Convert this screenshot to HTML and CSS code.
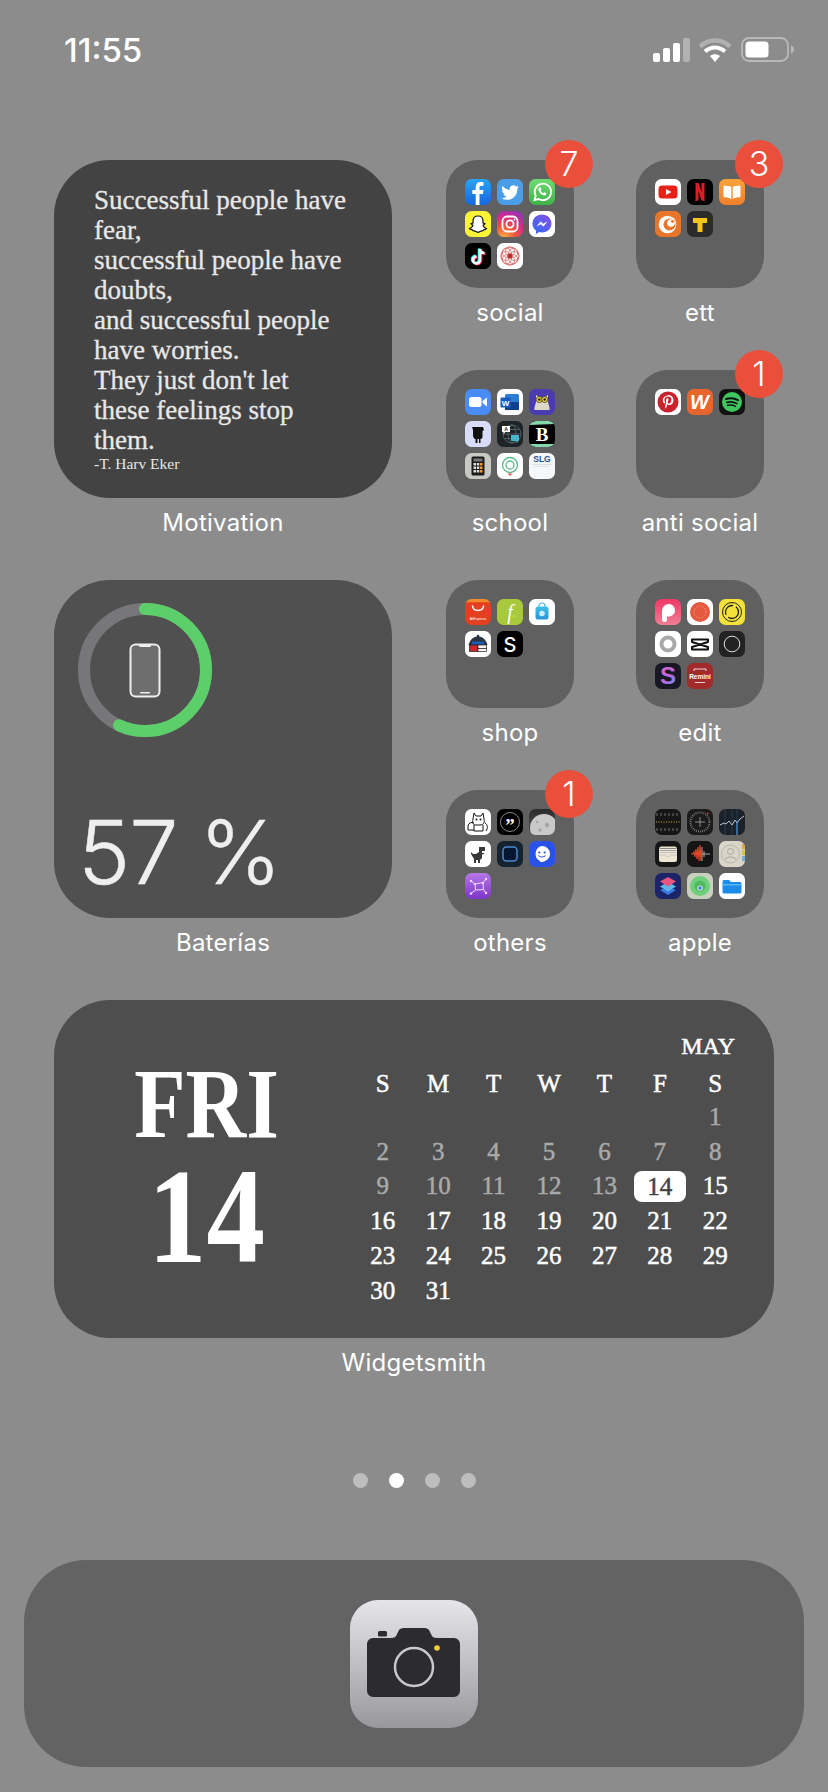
FILE: index.html
```html
<!DOCTYPE html>
<html lang="en">
<head>
<meta charset="utf-8">
<title>Home screen</title>
<link rel="stylesheet" href="styles.css">
</head>
<body>
<div class="screen">
  <header class="status">
    <div class="time">11:55</div>
    <div class="status-icons">
      <svg class="sig" viewBox="0 0 37 24"><rect x="0" y="15" width="7" height="9" rx="2" fill="#fff"/><rect x="10" y="10" width="7" height="14" rx="2" fill="#fff"/><rect x="20" y="5" width="7" height="19" rx="2" fill="#fff"/><rect x="30" y="0" width="7" height="24" rx="2" fill="#b2b2b2"/></svg>
      <svg class="wifi" viewBox="0 0 32 24"><path d="M1 8.500C9.500.500 22.500.500 31 8.500" fill="none" stroke="#b0b0b0" stroke-width="4.500"/><path d="M6 13.500c6-5.500 14-5.500 20 0" fill="none" stroke="#fff" stroke-width="4"/><path d="M11 18c3-2.500 7-2.500 10 0l-5 6z" fill="#fff"/></svg>
      <svg class="batt" viewBox="0 0 53 25"><rect x="1" y="1" width="46" height="23" rx="7" fill="none" stroke="#b9b9b9" stroke-width="1.800"/><rect x="4.500" y="4.500" width="23" height="16" rx="3.500" fill="#fff"/><path d="M50 8.500c2 .5 3 2.200 3 4s-1 3.500-3 4z" fill="#b9b9b9"/></svg>
    </div>
  </header>

  <section class="top-grid">
    <div class="cell">
      <div class="widget quote">
        <p class="quote-text">Successful people have<br>fear,<br>successful people have<br>doubts,<br>and successful people<br>have worries.<br>They just don't let<br>these feelings stop<br>them.</p>
        <p class="quote-author">-T. Harv Eker</p>
      </div>
      <div class="label">Motivation</div>
    </div>
    <div class="apps">
      <div class="cell folder-cell">
        <div class="folder">
          <span class="badge">7</span>
          <svg class="ico fb" viewBox="0 0 26 26"><path fill="#fff" d="M14.500 26V15h3.400l.5-4h-3.900V8.600c0-1.100.4-1.900 2-1.900h2V3.200C18 3.100 16.900 3 15.700 3c-3 0-5 1.800-5 5.200V11H7.300v4h3.400v11z"/></svg>
          <svg class="ico tw" viewBox="0 0 26 26"><path fill="#fff" transform="translate(3 3) scale(.83)" d="M22.460 6c-.77.35-1.600.58-2.460.69a4.300 4.300 0 0 0 1.880-2.380 8.600 8.600 0 0 1-2.720 1.040 4.280 4.280 0 0 0-7.320 3.910A12.160 12.160 0 0 1 3 4.790a4.280 4.280 0 0 0 1.330 5.720 4.240 4.240 0 0 1-1.940-.54v.05a4.280 4.280 0 0 0 3.440 4.200 4.300 4.300 0 0 1-1.930.07 4.280 4.280 0 0 0 4 2.980A8.600 8.600 0 0 1 2 19.540a12.130 12.130 0 0 0 6.560 1.920c7.880 0 12.200-6.530 12.200-12.200l-.01-.55A8.700 8.700 0 0 0 22.460 6z"/></svg>
          <svg class="ico wa" viewBox="0 0 26 26"><path fill="none" stroke="#fff" stroke-width="1.800" d="M5.500 21l1.200-4.200A8.200 8.200 0 1 1 9.800 20z"/><path fill="#fff" d="M10.300 8.500c-1.300 1-1.200 2.600-.2 4.300 1.200 2 3 3.300 4.900 3.600 1.300.2 2.500-.7 2.600-1.800l-2.200-1.300-1 1c-1.300-.5-2.200-1.400-2.800-2.700l.9-1-1-2.300c-.2-.2-.8-.2-1.200.2z"/></svg>
          <svg class="ico sc" viewBox="0 0 26 26"><path fill="#fff" stroke="#111" stroke-width="1.200" d="M13 5c3 0 5 2 5 5v2l2 .7c-.2 1-1.700 1.200-2 1.700.6 1.600 2 2.800 3.500 3.200-.3.9-1.800 1-2.700 1.200-.4 1-.6 1.100-1.700 1-1.600-.2-2.500 1.600-4.100 1.600s-2.500-1.800-4.100-1.600c-1.100.1-1.300 0-1.700-1-.9-.2-2.400-.3-2.700-1.200 1.500-.4 2.900-1.600 3.500-3.200-.3-.5-1.800-.7-2-1.700L8 12v-2c0-3 2-5 5-5z"/></svg>
          <svg class="ico ig" viewBox="0 0 26 26"><rect x="5.500" y="5.500" width="15" height="15" rx="4.500" fill="none" stroke="#fff" stroke-width="1.800"/><circle cx="13" cy="13" r="3.600" fill="none" stroke="#fff" stroke-width="1.800"/><circle cx="17.500" cy="8.500" r="1" fill="#fff"/></svg>
          <svg class="ico white" viewBox="0 0 26 26"><defs><linearGradient id="ms" x1="0" y1="1" x2="1" y2="0"><stop offset="0" stop-color="#2f6cf0"/><stop offset="1" stop-color="#8a4fe8"/></linearGradient></defs><path fill="url(#ms)" d="M13 3.500c5.500 0 9.500 3.900 9.500 9S18.500 21.500 13 21.500c-1 0-1.900-.1-2.700-.4L7 23v-3.400c-2.200-1.700-3.500-4.300-3.500-7.100 0-5.100 4-9 9.500-9z"/><path fill="#fff" d="M7.500 15.500l4-5 2.700 2.200 4.300-2.200-4 5-2.700-2.200z"/></svg>
          <svg class="ico black" viewBox="0 0 26 26"><g fill="none" stroke-width="2.600"><path stroke="#25f4ee" transform="translate(-1 -.6)" d="M15 6v11a3.500 3.500 0 1 1-3.500-3.500M15 6c.3 2.500 2 4 4.500 4.200"/><path stroke="#fe2c55" transform="translate(1 .6)" d="M15 6v11a3.500 3.500 0 1 1-3.500-3.500M15 6c.3 2.500 2 4 4.500 4.200"/><path stroke="#fff" d="M15 6v11a3.500 3.500 0 1 1-3.500-3.500M15 6c.3 2.500 2 4 4.500 4.200"/></g></svg>
          <svg class="ico white" viewBox="0 0 26 26"><g fill="none" stroke="#d9534f" stroke-width=".7"><circle cx="13" cy="13" r="9"/><circle cx="13" cy="8.500" r="4.500"/><circle cx="13" cy="17.500" r="4.500"/><circle cx="8.500" cy="13" r="4.500"/><circle cx="17.500" cy="13" r="4.500"/><circle cx="9.800" cy="9.800" r="4.500"/><circle cx="16.200" cy="9.800" r="4.500"/><circle cx="9.800" cy="16.200" r="4.500"/><circle cx="16.200" cy="16.200" r="4.500"/></g><circle cx="13" cy="13" r="2.500" fill="#b5302c"/></svg>
        </div>
        <div class="label">social</div>
      </div>
      <div class="cell folder-cell">
        <div class="folder">
          <span class="badge">3</span>
          <svg class="ico white" viewBox="0 0 26 26"><rect x="3.500" y="6.500" width="19" height="13" rx="3.500" fill="#e62117"/><path d="M11 10l5.500 3-5.500 3z" fill="#fff"/></svg>
          <svg class="ico black" viewBox="0 0 26 26"><path fill="#d81f26" d="M8.500 4h3.300l2.700 9V4h3v18l-3-.4-3-9.600v9.600l-3 .4z"/></svg>
          <svg class="ico books" viewBox="0 0 26 26"><path fill="#fff" d="M12.300 8v12c-1.800-1.200-4-1.700-7.800-1.700V6.800c3.800 0 6 .1 7.800 1.200zM13.700 8v12c1.800-1.200 4-1.700 7.800-1.700V6.800c-3.800 0-6 .1-7.800 1.200z"/></svg>
          <svg class="ico crunchy" viewBox="0 0 26 26"><circle cx="12.500" cy="13.500" r="8.800" fill="#fff"/><circle cx="14.500" cy="13.500" r="6" fill="#e8762a"/><circle cx="16" cy="12" r="3.800" fill="#fff"/><circle cx="17.500" cy="10.500" r="1.400" fill="#e8762a"/></svg>
          <svg class="ico darkt" viewBox="0 0 26 26"><path fill="#f5c518" d="M6 7h14v5h-4.500v9h-5v-9H6z"/></svg>
        </div>
        <div class="label">ett</div>
      </div>
      <div class="cell folder-cell">
        <div class="folder">
          <svg class="ico zoom" viewBox="0 0 26 26"><rect x="4" y="8" width="12.500" height="10" rx="2.500" fill="#fff"/><path d="M17.500 12l4.500-3.500v9L17.500 14z" fill="#fff"/></svg>
          <svg class="ico white" viewBox="0 0 26 26"><rect x="8" y="5" width="14" height="16" rx="1.500" fill="#2b7cd3"/><rect x="8" y="13" width="14" height="8" fill="#103f91"/><rect x="3.500" y="8.500" width="10" height="10" rx="1" fill="#185abd"/><text x="8.500" y="16.500" class="t-word">W</text></svg>
          <svg class="ico owl" viewBox="0 0 26 26"><path fill="#dcd9c7" d="M7 6l3 2h6l3-2v7c0 1 2 5 1.500 8h-15C5 18 7 14 7 13z"/><circle cx="10.300" cy="10.500" r="3" fill="#f5d533" stroke="#333" stroke-width=".8"/><circle cx="15.700" cy="10.500" r="3" fill="#f5d533" stroke="#333" stroke-width=".8"/><circle cx="10.300" cy="10.500" r="1.200" fill="#222"/><circle cx="15.700" cy="10.500" r="1.200" fill="#222"/></svg>
          <svg class="ico lav" viewBox="0 0 26 26"><path fill="#111" d="M7 6h11l1 3-1.500 1v6c0 1-1 2-2 2v4h-1.500v-4h-1.500v4H10.500v-4C9 18 8 16 8 14V9z"/></svg>
          <svg class="ico trans" viewBox="0 0 26 26"><g fill="none" stroke="#6d8288" stroke-width=".6"><circle cx="15" cy="13" r="9"/><ellipse cx="15" cy="13" rx="4" ry="9"/><path d="M6 13h18M7.500 8.500h15M7.500 17.500h15"/></g><path fill="#fff" d="M5 5h8v6H8.500l-2 2v-2H5z"/><text x="9" y="10" class="t-a">A</text><path fill="#48b5c8" d="M14 14h8v6h-1.500v2l-2-2H14z"/></svg>
          <svg class="ico bold" viewBox="0 0 26 26"><path fill="#82d8ac" d="M0 4C2 1 5 0 8 0h12c3 0 5 1 6 3zM26 23c-2 2-4 3-7 3H7c-3 0-5-1-7-3z"/><text x="13" y="19.500" class="t-b">B</text></svg>
          <svg class="ico calc" viewBox="0 0 26 26"><rect x="6.500" y="3.500" width="13" height="19" rx="1.500" fill="#1b1b1b"/><rect x="8.500" y="5.500" width="9" height="3" fill="#777"/><g fill="#ddd"><rect x="8.500" y="10" width="2.500" height="2.500"/><rect x="11.800" y="10" width="2.500" height="2.500"/><rect x="8.500" y="13.500" width="2.500" height="2.500"/><rect x="11.800" y="13.500" width="2.500" height="2.500"/><rect x="8.500" y="17" width="2.500" height="2.500"/><rect x="11.800" y="17" width="2.500" height="2.500"/></g><g fill="#f39c2d"><rect x="15" y="10" width="2.500" height="2.500"/><rect x="15" y="13.500" width="2.500" height="2.500"/><rect x="15" y="17" width="2.500" height="2.500"/></g></svg>
          <svg class="ico white" viewBox="0 0 26 26"><circle cx="13" cy="12" r="7.500" fill="none" stroke="#5cb98d" stroke-width="1.300"/><circle cx="13" cy="12" r="4" fill="none" stroke="#5cb98d" stroke-width="1.300"/><path d="M10.500 20.500h5L13 23z" fill="#e55"/></svg>
          <svg class="ico slg" viewBox="0 0 26 26"><text x="13" y="9" class="t-slg">SLG</text><g fill="#d5d9dd"><rect x="3" y="11" width="20" height=".8"/><rect x="5" y="13" width="16" height=".6"/></g></svg>
        </div>
        <div class="label">school</div>
      </div>
      <div class="cell folder-cell">
        <div class="folder">
          <span class="badge">1</span>
          <svg class="ico white" viewBox="0 0 26 26"><circle cx="13" cy="13" r="10.500" fill="#c9232d"/><path fill="#fff" d="M13.400 6.500c-3.700 0-5.600 2.400-5.600 4.700 0 1.300.6 2.700 1.700 3.200.3.100.4 0 .5-.3l.2-.8c0-.2 0-.3-.2-.5-.4-.5-.6-1.100-.6-1.700 0-2 1.500-3.500 3.800-3.500 2 0 3.200 1.200 3.200 3 0 2.200-1 4-2.400 4-.8 0-1.400-.7-1.200-1.500.2-1 .7-2 .7-2.700 0-.6-.3-1.200-1-1.200-.8 0-1.500.9-1.500 2 0 .7.300 1.200.3 1.200l-1 4.100c-.2.900-.1 2.300 0 3l.3.100c.4-.6 1.100-1.700 1.300-2.500l.5-2c.3.5 1 1 1.900 1 2.500 0 4.200-2.300 4.200-5.200 0-2.600-2.200-4.900-5.600-4.900z"/></svg>
          <svg class="ico watt" viewBox="0 0 26 26"><text x="12.500" y="20" class="t-w">W</text></svg>
          <svg class="ico nearblack" viewBox="0 0 26 26"><circle cx="13" cy="13" r="10" fill="#3ec75e"/><g fill="none" stroke="#111" stroke-linecap="round"><path d="M7 10c4-1 8.500-.8 12 1.200" stroke-width="2"/><path d="M7.800 13.300c3.500-.8 7-.5 10 1.200" stroke-width="1.700"/><path d="M8.500 16.300c3-.7 5.600-.4 8 1" stroke-width="1.400"/></g></svg>
        </div>
        <div class="label">anti social</div>
      </div>
    </div>

    <div class="cell">
      <div class="widget battery">
        <svg class="ring" viewBox="0 0 134 134">
          <circle cx="67" cy="67" r="61" fill="none" stroke="#77777a" stroke-width="12"/>
          <circle cx="67" cy="67" r="61" fill="none" stroke="#5dcf6a" stroke-width="12" stroke-linecap="round" pathLength="100" stroke-dasharray="57 100" transform="rotate(-90 67 67)"/>
          <rect x="52.500" y="41.500" width="29" height="52" rx="5" fill="#6e6e6e" stroke="#eee" stroke-width="2"/>
          <path d="M61 42h12c0 1.500-.5 2-1.500 2h-9c-1 0-1.500-.5-1.500-2z" fill="#eee"/>
          <rect x="62" y="89" width="10" height="1.500" rx=".7" fill="#eee"/>
        </svg>
        <div class="batt-pct">57 %</div>
      </div>
      <div class="label">Baterías</div>
    </div>
    <div class="apps">
      <div class="cell folder-cell">
        <div class="folder">
          <svg class="ico ali" viewBox="0 0 26 26"><path d="M7.500 7c.6 6 10.400 6 11 0" fill="none" stroke="#fff" stroke-width="1.500" stroke-linecap="round"/><text x="13" y="21" class="t-ali">AliExpress</text></svg>
          <svg class="ico fala" viewBox="0 0 26 26"><text x="13" y="20" class="t-fala">f</text><circle cx="17" cy="17" r=".6" fill="#fff"/></svg>
          <svg class="ico white" viewBox="0 0 26 26"><defs><linearGradient id="bag" x1="0" y1="0" x2="0" y2="1"><stop offset="0" stop-color="#3fc1ea"/><stop offset="1" stop-color="#2b94d8"/></linearGradient></defs><path d="M10 8V7a3 3 0 0 1 6 0v1" fill="none" stroke="#3fb6e4" stroke-width="1.200"/><rect x="6.500" y="7.500" width="13" height="13" rx="2.500" fill="url(#bag)"/><circle cx="13" cy="14.500" r="2.800" fill="#cdeefa"/></svg>
          <svg class="ico white" viewBox="0 0 26 26"><path d="M3.500 14C5 8 9 5.500 13 5.500S21 8 22.500 14z" fill="#2a3540"/><circle cx="13" cy="5" r="1.300" fill="#2a3540"/><rect x="7" y="10.500" width="12" height="3" fill="#1f5bb5"/><rect x="4.500" y="14" width="8.500" height="6.500" fill="#d3222c" stroke="#222" stroke-width=".7"/><rect x="13" y="14" width="8.500" height="3.500" fill="#f4f4f4" stroke="#222" stroke-width=".7"/><rect x="13" y="17.500" width="8.500" height="3" fill="#f4f4f4" stroke="#222" stroke-width=".7"/></svg>
          <svg class="ico black" viewBox="0 0 26 26"><text x="13" y="20.500" class="t-s">S</text></svg>
        </div>
        <div class="label">shop</div>
      </div>
      <div class="cell folder-cell">
        <div class="folder">
          <svg class="ico pics" viewBox="0 0 26 26"><path fill="#fff" d="M7 12a7 7 0 0 1 7-7 6.500 6.500 0 0 1 6 6.500c0 3.500-3 6-6.500 6H12v3a2.500 2.500 0 0 1-5 0z"/></svg>
          <svg class="ico white" viewBox="0 0 26 26"><circle cx="13" cy="13" r="10" fill="#e55a3f"/><circle cx="13" cy="13" r="6" fill="none" stroke="#f5b9a8" stroke-width="1" stroke-dasharray="1 2"/></svg>
          <svg class="ico yellow" viewBox="0 0 26 26"><circle cx="13" cy="13" r="9.500" fill="none" stroke="#222" stroke-width="1"/><circle cx="13" cy="13" r="6.500" fill="none" stroke="#222" stroke-width="1.300" stroke-dasharray="14 3"/></svg>
          <svg class="ico white" viewBox="0 0 26 26"><circle cx="13" cy="13" r="6.500" fill="none" stroke="#a8a8a8" stroke-width="4"/></svg>
          <svg class="ico white" viewBox="0 0 26 26"><path fill="none" stroke="#111" stroke-width="2" stroke-linejoin="round" d="M5 8.500h16v2.500L5 16v2.500h16V16L5 11z"/></svg>
          <svg class="ico dark22" viewBox="0 0 26 26"><circle cx="13" cy="13" r="7.800" fill="none" stroke="#ddd" stroke-width="1"/></svg>
          <svg class="ico dark1a" viewBox="0 0 26 26"><defs><linearGradient id="sg" x1="0" y1="0" x2="1" y2="1"><stop offset="0" stop-color="#f25fb0"/><stop offset=".6" stop-color="#b06be8"/><stop offset="1" stop-color="#3fa6f0"/></linearGradient></defs><text x="13" y="21" class="t-sg" fill="url(#sg)">S</text></svg>
          <svg class="ico remini" viewBox="0 0 26 26"><path d="M7 8V6h12v2M8 19.500h10" fill="none" stroke="#fff" stroke-width=".8"/><text x="13" y="15.500" class="t-rem">Remini</text></svg>
        </div>
        <div class="label">edit</div>
      </div>
      <div class="cell folder-cell">
        <div class="folder">
          <span class="badge">1</span>
          <svg class="ico white" viewBox="0 0 26 26"><path fill="#fff" stroke="#111" stroke-width="1" d="M9 4l2 3h5l2-3 1 6c1 4-1 6-4 6h-4c-3 0-4-2-3-6z"/><circle cx="11.500" cy="10.500" r="1" fill="#111"/><circle cx="15.500" cy="10.500" r="1" fill="#111"/><path fill="none" stroke="#111" stroke-width="1" d="M9 16v6h9v-6M3 17a4 4 0 0 1 6-3M3 17v4h6M20 14c3 2 3 5 1 8"/></svg>
          <svg class="ico black" viewBox="0 0 26 26"><circle cx="13" cy="13" r="9.500" fill="none" stroke="#888" stroke-width="1"/><text x="13" y="23" class="t-q">”</text></svg>
          <svg class="ico moon" viewBox="0 0 26 26"><circle cx="15" cy="19" r="14" fill="#c9c9c9"/><circle cx="18" cy="16" r="2.200" fill="#a5a5a5"/><circle cx="11" cy="21" r="1.800" fill="#a5a5a5"/><circle cx="8" cy="13" r="1.200" fill="#a5a5a5"/></svg>
          <svg class="ico white" viewBox="0 0 26 26"><path fill="#3a3a3a" d="M14 6h6v4h-3v2h2v1l-2 .5V17l-2 2v3h-2v-3h-2v3H9v-4L6 13v-2l2 2h3l3-2z"/></svg>
          <svg class="ico navy" viewBox="0 0 26 26"><rect x="6" y="6" width="14" height="14" rx="3.500" fill="#05182f" stroke="#4a8ad0" stroke-width="1.500"/></svg>
          <svg class="ico smile" viewBox="0 0 26 26"><path fill="#fff" d="M13 5a8 8 0 0 1 8 8c0 3-1.500 5-4 6.500-2 1-3.500 1.500-5 1.500-.5 0-1-.5-1-1A8 8 0 0 1 13 5z"/><circle cx="10.300" cy="11.500" r="1.100" fill="#2852e8"/><circle cx="15.700" cy="11.500" r="1.100" fill="#2852e8"/><path d="M9.500 14.500c1.500 2 5.500 2 7 0" fill="none" stroke="#2852e8" stroke-width="1.100"/></svg>
          <svg class="ico cons" viewBox="0 0 26 26"><path d="M6 8l4 3 8-1.500L21 6M10 11l.5 6L6 20.500M10.500 17l8-.5L21 20M18 9.500l.5 7" fill="none" stroke="#f2dcff" stroke-width="1"/><g fill="#f2dcff"><circle cx="6" cy="8" r="1.200"/><circle cx="21" cy="6" r="1.200"/><circle cx="6" cy="20.500" r="1.200"/><circle cx="21" cy="20" r="1.200"/><circle cx="10" cy="11" r="1"/><circle cx="18" cy="10" r="1"/></g></svg>
        </div>
        <div class="label">others</div>
      </div>
      <div class="cell folder-cell">
        <div class="folder">
          <svg class="ico blk16" viewBox="0 0 26 26"><path d="M1 13h24" stroke="#c8b23a" stroke-width="1" stroke-dasharray="1 1.500"/><path d="M2 4v3M6 4v3M10 4v3M14 4v3M18 4v3M22 4v3M2 19v3M6 19v3M10 19v3M14 19v3M18 19v3M22 19v3" stroke="#999" stroke-width=".7"/></svg>
          <svg class="ico blk1b" viewBox="0 0 26 26"><circle cx="13" cy="13" r="9.500" fill="none" stroke="#8a8a8a" stroke-width="2" stroke-dasharray=".8 1.200"/><path d="M13 8v10M8 13h10" stroke="#bbb" stroke-width=".7"/><path d="M20 5l1.500-1" stroke="#d44" stroke-width="1.200"/></svg>
          <svg class="ico stocks" viewBox="0 0 26 26"><path d="M6 0v26M13 0v26M18 0v26" stroke="#2c4258" stroke-width=".8"/><path d="M1 16l4-2 2 1 3-3 3 4 3-5 2 3 3-4 4-3" fill="none" stroke="#b8c4cf" stroke-width="1"/><path d="M18 12v14" stroke="#4a90d9" stroke-width="1.200"/></svg>
          <svg class="ico blk16" viewBox="0 0 26 26"><rect x="4" y="5.500" width="18" height="15.500" rx="2.500" fill="#ece5d2"/><path d="M4.500 7.500h17" stroke="#8a8a8a" stroke-width="1.200"/><path d="M4.500 9.500h17" stroke="#a8a8a8" stroke-width="1.200"/><path d="M4.500 11.500h17" stroke="#c4c4c4" stroke-width="1.200"/><path d="M4.500 14h6c.5 2 4.500 2 5 0h6" fill="#ece5d2" stroke="#bbb" stroke-width=".7"/></svg>
          <svg class="ico blk14" viewBox="0 0 26 26"><path d="M13 13h10" stroke="#bbb" stroke-width=".9"/><path d="M15 6v14M17 10v6" stroke="#bbb" stroke-width=".9"/><path d="M4 13h2l1-2 1 5 1-8 1 10 1-12 1 14 1-16 1 16 1-10" fill="none" stroke="#e04a2a" stroke-width="1.100"/></svg>
          <svg class="ico contacts" viewBox="0 0 26 26"><circle cx="11.500" cy="13" r="9" fill="none" stroke="#b0aea4" stroke-width=".8"/><circle cx="11.500" cy="10.500" r="3" fill="none" stroke="#a8a69c" stroke-width="1"/><path d="M6 19c1-4 10-4 11 0" fill="none" stroke="#a8a69c" stroke-width="1"/><rect x="23" y="3" width="3" height="5" fill="#e8a23a"/><rect x="23" y="9" width="3" height="5" fill="#d9c24a"/><rect x="23" y="15" width="3" height="5" fill="#6ab0d8"/></svg>
          <svg class="ico shortc" viewBox="0 0 26 26"><path d="M13 14l8 3-8 5-8-5z" fill="#3a7de0"/><path d="M13 9l8 4.500-8 5-8-5z" fill="#5fb6e8"/><path d="M13 4l8 4.500-8 5-8-5z" fill="#e8567f"/></svg>
          <svg class="ico find" viewBox="0 0 26 26"><circle cx="13" cy="13" r="10" fill="#6fcf7b"/><circle cx="13" cy="13" r="5.500" fill="#4fb860"/><circle cx="13" cy="15" r="2.600" fill="#eee"/><circle cx="13" cy="15" r="1.700" fill="#2f7fe0"/></svg>
          <svg class="ico white" viewBox="0 0 26 26"><path fill="#1d8ce8" d="M3.500 8.500A1.500 1.500 0 0 1 5 7h5l2 2h9a1.500 1.500 0 0 1 1.500 1.500V19a1.500 1.500 0 0 1-1.500 1.500H5A1.500 1.500 0 0 1 3.500 19z"/><path fill="#5cb6f2" d="M3.500 11h19v1.500h-19z"/></svg>
        </div>
        <div class="label">apple</div>
      </div>
    </div>
  </section>

  <section class="cell calendar-cell">
    <div class="widget calendar">
      <div class="cal-today">
        <div class="cal-dow">FRI</div>
        <div class="cal-num">14</div>
      </div>
      <div class="cal-month">
        <div class="cal-name">MAY</div>
        <div class="cal-grid">
          <span>S</span><span>M</span><span>T</span><span>W</span><span>T</span><span>F</span><span>S</span>
          <span></span><span></span><span></span><span></span><span></span><span></span><span class="past">1</span>
          <span class="past">2</span><span class="past">3</span><span class="past">4</span><span class="past">5</span><span class="past">6</span><span class="past">7</span><span class="past">8</span>
          <span class="past">9</span><span class="past">10</span><span class="past">11</span><span class="past">12</span><span class="past">13</span><span class="now"><b>14</b></span><span>15</span>
          <span>16</span><span>17</span><span>18</span><span>19</span><span>20</span><span>21</span><span>22</span>
          <span>23</span><span>24</span><span>25</span><span>26</span><span>27</span><span>28</span><span>29</span>
          <span>30</span><span>31</span>
        </div>
      </div>
    </div>
    <div class="label">Widgetsmith</div>
  </section>

  <div class="dots"><i class="dot"></i><i class="dot on"></i><i class="dot"></i><i class="dot"></i></div>

  <footer class="dock">
    <svg class="camera" viewBox="0 0 128 128">
      <path fill="#2c2c2e" d="M17 44a6 6 0 0 1 6-6h18c3 0 5-1 6-4l1-2c1-3 3-4 6-4h20c3 0 5 1 6 4l1 2c1 3 3 4 6 4h17a6 6 0 0 1 6 6v47a6 6 0 0 1-6 6H23a6 6 0 0 1-6-6z"/>
      <rect x="28" y="31" width="9" height="5.500" rx="1.500" fill="#2c2c2e"/>
      <circle cx="64" cy="67" r="19" fill="none" stroke="#c9c9cc" stroke-width="2.500"/>
      <circle cx="87" cy="48" r="2.800" fill="#f5cf3a"/>
    </svg>
  </footer>
</div>
</body>
</html>
```

FILE: styles.css
```css
* { box-sizing: border-box; }
html, body { margin: 0; padding: 0; }
body { width: 828px; height: 1792px; overflow: hidden; background: #8c8c8c; font-family: Inter, "Liberation Sans", sans-serif; color: #fff; }
.screen { width: 828px; height: 1792px; display: flex; flex-direction: column; }

.status { height: 160px; padding: 31px 34px 0 64px; display: flex; justify-content: space-between; align-items: flex-start; flex: none; }
.time { font-size: 33px; font-weight: 500; line-height: 38px; color: #fff; }
.status-icons { display: flex; align-items: center; gap: 8px; margin-top: 6px; }
.sig { width: 37px; height: 24px; }
.wifi { width: 32px; height: 24px; margin-left: 1px; }
.batt { width: 53px; height: 25px; margin-left: 2px; }

.top-grid { margin-left: 54px; display: grid; grid-template-columns: 338px auto; column-gap: 54px; row-gap: 42px; justify-content: start; }
.apps { display: grid; grid-template-columns: 128px 128px; column-gap: 62px; row-gap: 42px; }
.cell { display: flex; flex-direction: column; align-items: center; }
.label { margin-top: 10px; height: 30px; line-height: 30px; font-size: 24px; color: #fff; white-space: nowrap; letter-spacing: .25px; }

.widget { width: 338px; height: 338px; border-radius: 56px; }
.quote { background: #434343; padding: 25px 20px 0 40px; color: #e8e8e8; }
.quote-text { margin: 0; font-family: "Liberation Serif", serif; font-size: 27px; line-height: 30px; -webkit-text-stroke: .3px #e8e8e8; }
.quote-author { margin: 0; font-family: "Liberation Serif", serif; font-size: 15.500px; line-height: 18px; }

.battery { background: #505050; padding: 23px 0 0 24px; display: flex; flex-direction: column; }
.ring { width: 134px; height: 134px; flex: none; }
.batt-pct { margin-top: auto; margin-bottom: 22px; font-size: 88px; line-height: 88px; font-weight: 300; color: #efefef; letter-spacing: -1px; word-spacing: -2px; -webkit-text-stroke: .5px #efefef; }

.folder { position: relative; width: 128px; height: 128px; border-radius: 32px; background: #606060; padding: 19px; display: grid; grid-template-columns: repeat(3, 26px); grid-auto-rows: 26px; gap: 6px; align-content: start; }
.badge { position: absolute; right: -19px; top: -20px; width: 48px; height: 48px; border-radius: 50%; background: #ea4f3b; color: #fff; font-size: 34px; font-weight: 300; line-height: 48px; text-align: center; z-index: 1; }
.ico { width: 26px; height: 26px; border-radius: 6.500px; display: block; overflow: hidden; }

.fb { background: linear-gradient(#2aa4f4, #1666e0); }
.tw { background: #4a9ee8; }
.wa { background: linear-gradient(#6fdc72, #3eb24a); }
.sc { background: #fdf337; }
.ig { background: radial-gradient(circle at 25% 105%, #fdb34a 0%, #f0593a 35%, #d02c8e 65%, #7b35c4 100%); }
.white { background: #fff; }
.black { background: #000; }
.nearblack { background: #111; }
.books { background: linear-gradient(#f9a33d, #ef7f2a); }
.crunchy { background: #e8762a; }
.darkt { background: #2b2b2b; }
.zoom { background: #4a8cf5; }
.owl { background: #4b3bb0; }
.lav { background: #d8dcf8; }
.trans { background: #1d2326; }
.bold { background: #000; }
.calc { background: #c9c9c4; }
.slg { background: #f6f7f8; }
.watt { background: #e8652f; }
.ali { background: linear-gradient(#f08a2a 0, #f08a2a 12%, #e33f20 14%); }
.fala { background: #a8c93c; }
.pics { background: linear-gradient(#ef3766, #ee7f93); }
.yellow { background: #f4e23a; }
.dark22 { background: #222; }
.dark1a { background: #181824; }
.remini { background: #a32a2a; }
.moon { background: linear-gradient(#2a2a2a, #555); }
.navy { background: #16222e; }
.smile { background: #2852e8; }
.cons { background: linear-gradient(#b676e8, #7d35c8); }
.blk16 { background: #161616; }
.blk1b { background: #1b1b1b; }
.blk14 { background: #141414; }
.stocks { background: #1a2129; }
.contacts { background: #d9d5c9; }
.shortc { background: #1b2468; }
.find { background: #c8d0be; }

.t-word { font: 700 8px "Liberation Sans", sans-serif; fill: #fff; text-anchor: middle; }
.t-a { font: 700 5px "Liberation Sans", sans-serif; fill: #222; text-anchor: middle; }
.t-b { font: 700 19px "Liberation Serif", serif; fill: #fff; text-anchor: middle; }
.t-slg { font: 700 8.500px "Liberation Sans", sans-serif; fill: #2c4f8f; text-anchor: middle; }
.t-w { font: italic 700 20px "Liberation Sans", sans-serif; fill: #fff; text-anchor: middle; }
.t-ali { font: 400 3.500px "Liberation Sans", sans-serif; fill: #fff; text-anchor: middle; }
.t-fala { font: italic 400 20px "Liberation Serif", serif; fill: #fff; text-anchor: middle; }
.t-s { font: 500 20px Inter, "Liberation Sans", sans-serif; fill: #fff; text-anchor: middle; }
.t-sg { font: 700 24px "Liberation Sans", sans-serif; text-anchor: middle; }
.t-rem { font: 700 6.500px "Liberation Sans", sans-serif; fill: #fff; text-anchor: middle; }
.t-q { font: 700 19px "Liberation Serif", serif; fill: #fff; text-anchor: middle; }

.calendar-cell { margin: 42px 0 0 54px; width: 720px; flex: none; }
.calendar { width: 720px; background: #4e4e4e; display: flex; padding: 32px 31px 0 0; }
.cal-today { width: 301px; text-align: center; font-family: "Liberation Serif", serif; font-weight: 700; padding: 24px 0 0 4px; flex: none; }
.cal-dow { font-size: 100px; line-height: 96px; transform: scaleX(.84); }
.cal-num { font-size: 136px; line-height: 118px; transform: scaleX(.86); margin-top: 5px; }
.cal-month { flex: 1; font-family: "Liberation Serif", serif; font-weight: 400; -webkit-text-stroke: .5px currentColor; }
.cal-name { text-align: right; font-size: 24px; line-height: 28px; padding-right: 8px; }
.cal-grid { display: grid; grid-template-columns: repeat(7, 1fr); grid-template-rows: 32.800px; grid-auto-rows: 34.800px; margin-top: 7px; font-size: 25px; text-align: center; line-height: 34.800px; }
.past { color: #aaa; }
.now { display: flex; align-items: center; justify-content: center; }
.now b { display: block; width: 52px; height: 31px; line-height: 31px; border-radius: 8px; background: #fff; color: #444; font-weight: 400; }

.dots { display: flex; justify-content: center; gap: 21px; margin-top: 95px; flex: none; }
.dot { width: 15px; height: 15px; border-radius: 50%; background: #bdbdbd; display: block; }
.dot.on { background: #fff; }

.dock { margin: 72px 24px 0; height: 207px; flex: none; border-radius: 62px; background: #636363; display: flex; justify-content: center; padding-top: 40px; }
.camera { width: 128px; height: 128px; border-radius: 28px; background: linear-gradient(#e6e6ea, #98989d); display: block; }
```
